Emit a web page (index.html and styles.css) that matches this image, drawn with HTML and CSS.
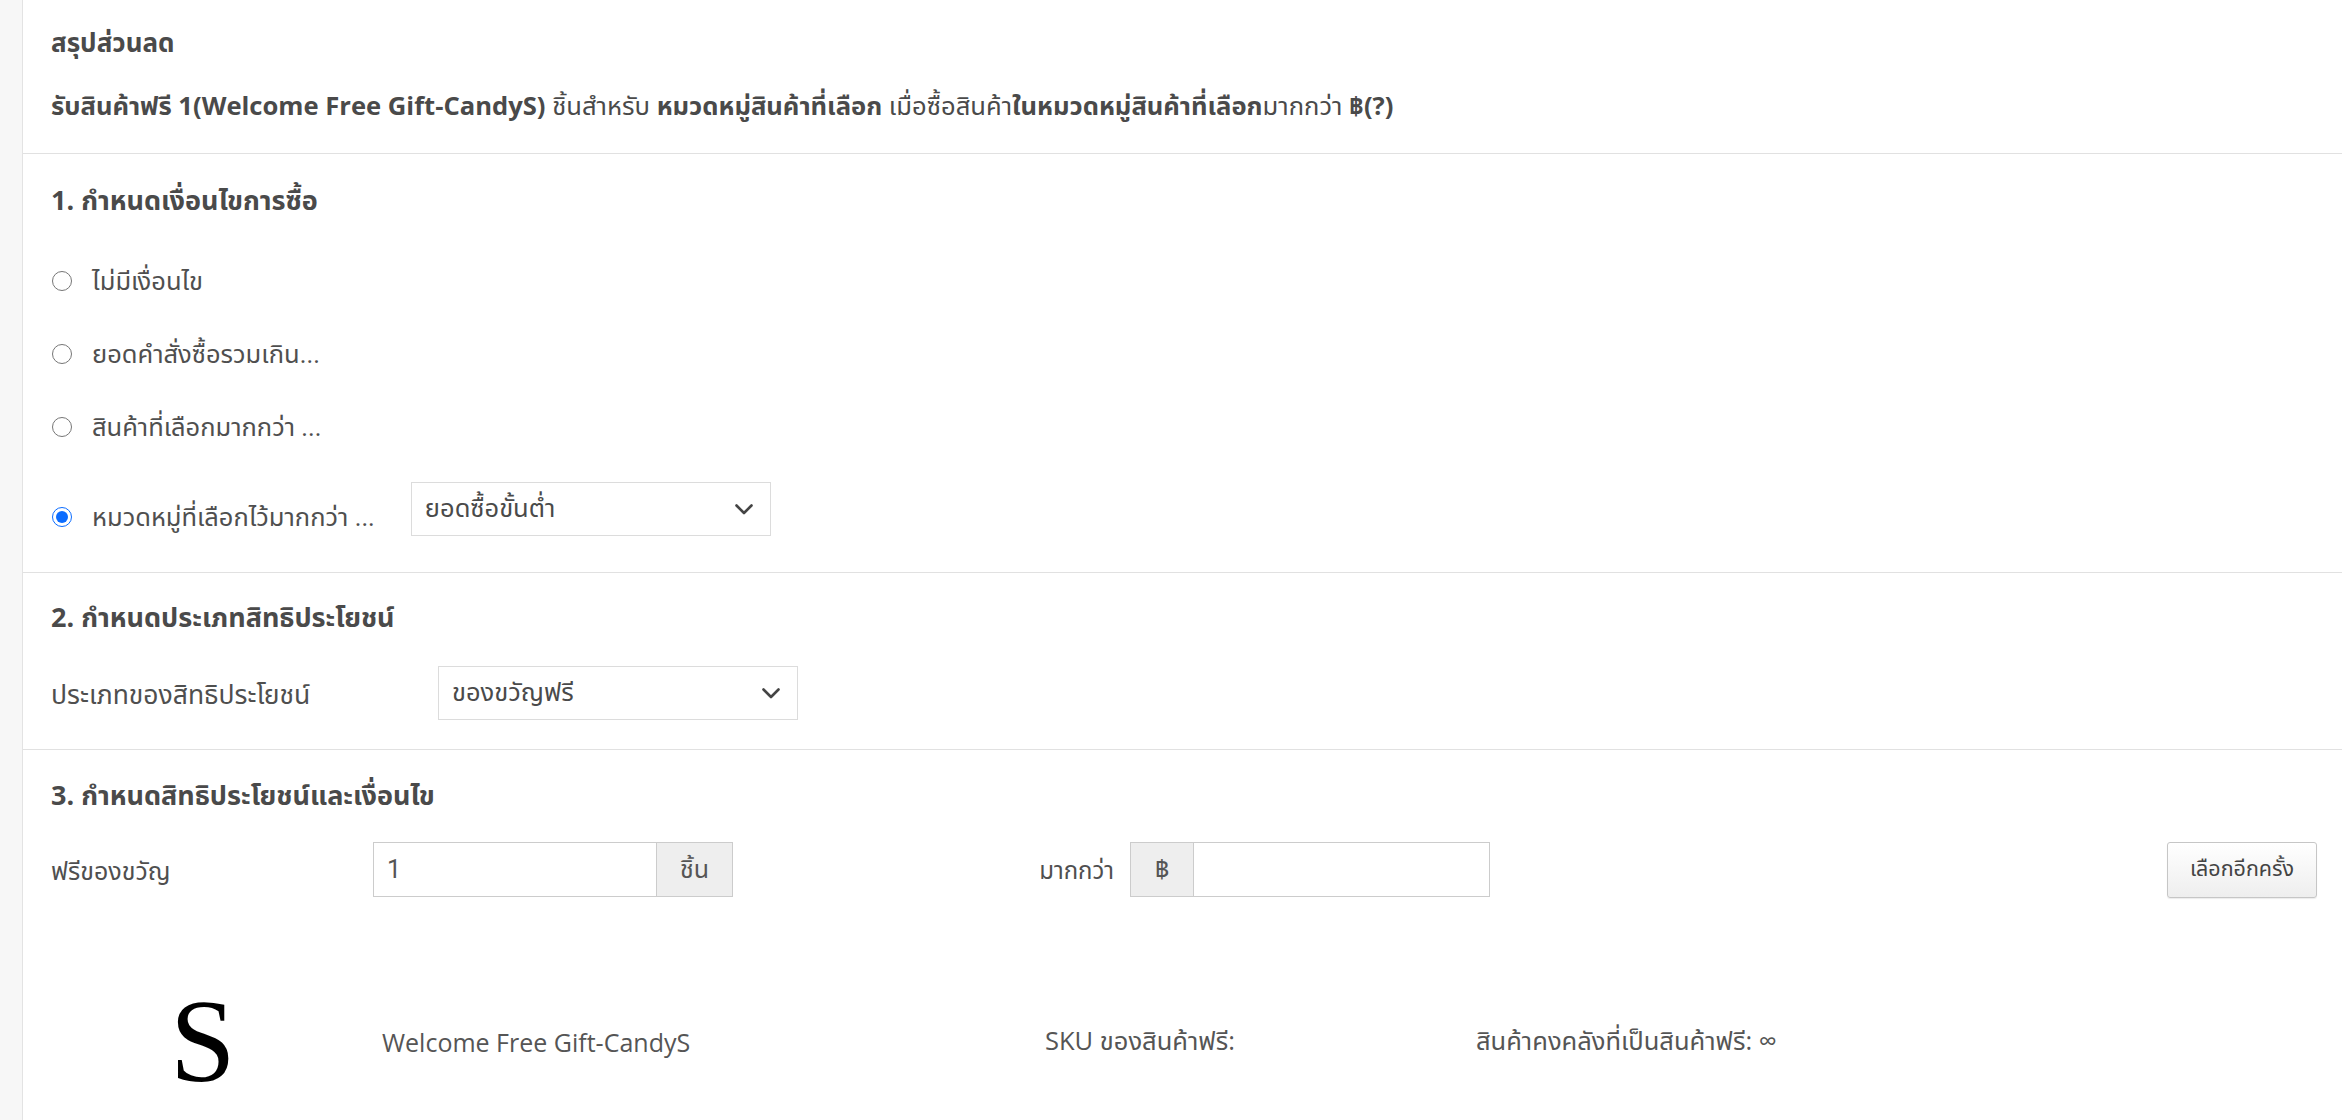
FILE: index.html
```html
<!DOCTYPE html>
<html lang="th">
<head>
<meta charset="utf-8">
<title>สรุปส่วนลด</title>
<link rel="stylesheet" href="styles.css">
</head>
<body>
<div class="page">
  <aside class="side"></aside>
  <main class="content">
    <section class="sec sec-summary">
      <h2 class="title">สรุปส่วนลด</h2>
      <p class="summary"><b>รับสินค้าฟรี 1(Welcome Free Gift-CandyS)</b> ชิ้นสำหรับ <b>หมวดหมู่สินค้าที่เลือก</b> เมื่อซื้อสินค้า<b>ในหมวดหมู่สินค้าที่เลือก</b>มากกว่า <b>฿(?)</b></p>
    </section>

    <section class="sec sec-one">
      <h3 class="heading">1. กำหนดเงื่อนไขการซื้อ</h3>
      <div class="radios">
        <label class="radio-row"><input type="radio" name="cond" class="radio"><span class="rlabel">ไม่มีเงื่อนไข</span></label>
        <label class="radio-row"><input type="radio" name="cond" class="radio"><span class="rlabel">ยอดคำสั่งซื้อรวมเกิน...</span></label>
        <label class="radio-row"><input type="radio" name="cond" class="radio"><span class="rlabel">สินค้าที่เลือกมากกว่า ...</span></label>
        <div class="radio-row radio-last">
          <label class="radio-inner"><input type="radio" name="cond" class="radio" checked><span class="rlabel">หมวดหมู่ที่เลือกไว้มากกว่า ...</span></label>
          <div class="select sel-min">
            <span>ยอดซื้อขั้นต่ำ</span>
            <svg class="chev" width="18" height="11" viewBox="0 0 18 11"><path d="M1.5 1.5 L9 9 L16.5 1.5" fill="none" stroke="#444" stroke-width="2.6" stroke-linecap="round" stroke-linejoin="round"/></svg>
          </div>
        </div>
      </div>
    </section>

    <section class="sec sec-two">
      <h3 class="heading">2. กำหนดประเภทสิทธิประโยชน์</h3>
      <div class="form-row">
        <span class="flabel wide">ประเภทของสิทธิประโยชน์</span>
        <div class="select sel-type">
          <span>ของขวัญฟรี</span>
          <svg class="chev" width="18" height="11" viewBox="0 0 18 11"><path d="M1.5 1.5 L9 9 L16.5 1.5" fill="none" stroke="#444" stroke-width="2.6" stroke-linecap="round" stroke-linejoin="round"/></svg>
        </div>
      </div>
    </section>

    <section class="sec sec-three">
      <h3 class="heading">3. กำหนดสิทธิประโยชน์และเงื่อนไข</h3>
      <div class="form-row benefit-row">
        <span class="flabel gift">ฟรีของขวัญ</span>
        <div class="group">
          <div class="inp inp-qty">1</div>
          <div class="addon addon-unit">ชิ้น</div>
        </div>
        <span class="flabel more">มากกว่า</span>
        <div class="group">
          <div class="addon addon-baht">฿</div>
          <div class="inp inp-amt"></div>
        </div>
        <button class="btn">เลือกอีกครั้ง</button>
      </div>
      <div class="product">
        <div class="pimg"><span class="pimg-s">S</span></div>
        <div class="pname">Welcome Free Gift-CandyS</div>
        <div class="psku">SKU ของสินค้าฟรี:</div>
        <div class="pstock">สินค้าคงคลังที่เป็นสินค้าฟรี: ∞</div>
      </div>
    </section>
  </main>
</div>
</body>
</html>
```

FILE: styles.css
```css
html, body {
  margin: 0;
  padding: 0;
  background: #fff;
}
body {
  font-family: "Open Sans", "Noto Sans", "Noto Sans Thai", sans-serif;
  font-size: 25px;
  color: #4f4f4f;
}
.page {
  display: flex;
  min-height: 1120px;
}
.side {
  width: 22px;
  flex: none;
  background: #f7f7f7;
  border-right: 1px solid #e3e3e3;
}
.content {
  flex: 1;
  min-width: 0;
}
.sec {
  border-bottom: 1px solid #e1e1e1;
  padding: 0 25px 0 28px;
}
.sec-three {
  border-bottom: none;
}
.title {
  margin: 0;
  padding-top: 25px;
  font-size: 26px;
  line-height: 34px;
  font-weight: 700;
  color: #4a4a4a;
}
.summary {
  margin: 30px 0 0;
  padding-bottom: 30px;
  line-height: 34px;
  font-size: 25.6px;
  color: #4a4a4a;
}
.summary b {
  font-weight: 700;
}
.heading {
  margin: 0;
  font-size: 27px;
  line-height: 34px;
  font-weight: 700;
  color: #4a4a4a;
}
.sec-one {
  padding-top: 29px;
  padding-bottom: 36px;
}
.radios {
  display: flex;
  flex-direction: column;
  margin-top: 49px;
  gap: 43px;
}
.radio-row {
  display: flex;
  align-items: center;
  height: 30px;
  font-family: Roboto, "Noto Sans", "Noto Sans Thai", sans-serif;
  font-size: 25.5px;
}
.radio-inner {
  display: flex;
  align-items: center;
  height: 30px;
  padding-bottom: 4px;
}
.radio-last {
  height: 54px;
  align-items: flex-end;
  margin-top: -3px;
}
.radio {
  width: 20px;
  height: 20px;
  margin: 0 0 0 1px;
  accent-color: #0b6cff;
}
.rlabel {
  margin-left: 20px;
  line-height: 30px;
}
.select {
  display: flex;
  align-items: center;
  justify-content: space-between;
  box-sizing: border-box;
  height: 54px;
  width: 360px;
  border: 1px solid #dcdcdc;
  padding: 0 17px 0 13px;
  font-family: Roboto, "Noto Sans", "Noto Sans Thai", sans-serif;
  font-size: 25.5px;
  color: #4a4a4a;
  background: #fff;
}
.sel-min {
  margin-left: 36px;
}
.chev {
  flex: none;
}
.sec-two {
  padding-top: 27px;
  padding-bottom: 29px;
}
.form-row {
  display: flex;
  align-items: center;
  font-family: Roboto, "Noto Sans", "Noto Sans Thai", sans-serif;
  font-size: 25px;
}
.sec-two .form-row {
  margin-top: 32px;
}
.flabel.wide {
  width: 387px;
  flex: none;
  padding-top: 6px;
  font-size: 26.5px;
}
.sec-three {
  padding-top: 28px;
}
.benefit-row {
  margin-top: 30px;
  height: 55px;
}
.flabel.gift {
  width: 322px;
  flex: none;
  padding-top: 4px;
}
.flabel.more {
  width: 397px;
  flex: none;
  box-sizing: border-box;
  text-align: right;
  padding-right: 16px;
  padding-top: 4px;
  font-size: 24px;
}
.group {
  display: flex;
  width: 360px;
  height: 55px;
  box-sizing: border-box;
  flex: none;
}
.inp {
  flex: 1;
  box-sizing: border-box;
  border: 1px solid #cccccc;
  background: #fff;
  display: flex;
  align-items: center;
  padding-left: 13px;
  color: #555;
}
.inp-qty {
  border-right: none;
}
.addon {
  flex: none;
  box-sizing: border-box;
  background: #eeeeee;
  border: 1px solid #cccccc;
  display: flex;
  align-items: center;
  justify-content: center;
  color: #555;
}
.addon-unit {
  width: 77px;
}
.addon-baht {
  width: 63px;
  border-right: none;
}
.btn {
  margin-left: auto;
  width: 150px;
  height: 56px;
  box-sizing: border-box;
  border: 1px solid #c6c6c6;
  border-radius: 3px;
  background: linear-gradient(#ffffff, #eeeeee);
  box-shadow: 0 1px 1px rgba(0,0,0,0.08);
  font-family: Roboto, "Noto Sans", "Noto Sans Thai", sans-serif;
  font-size: 21.5px;
  color: #444;
  padding: 0;
}
.product {
  display: flex;
  align-items: center;
  margin-top: 104px;
  height: 82px;
}
.pimg {
  width: 331px;
  flex: none;
  display: flex;
}
.pimg-s {
  display: block;
  margin-left: 119px;
  width: 60px;
  text-align: center;
  font-family: "Liberation Serif", "Times New Roman", serif;
  font-size: 118px;
  line-height: 82px;
  color: #000;
}
.pname {
  width: 663px;
  flex: none;
  font-size: 25px;
  color: #555;
}
.psku {
  width: 431px;
  flex: none;
  color: #555;
  font-size: 25.5px;
}
.pstock {
  color: #555;
  font-size: 25.5px;
}
```
